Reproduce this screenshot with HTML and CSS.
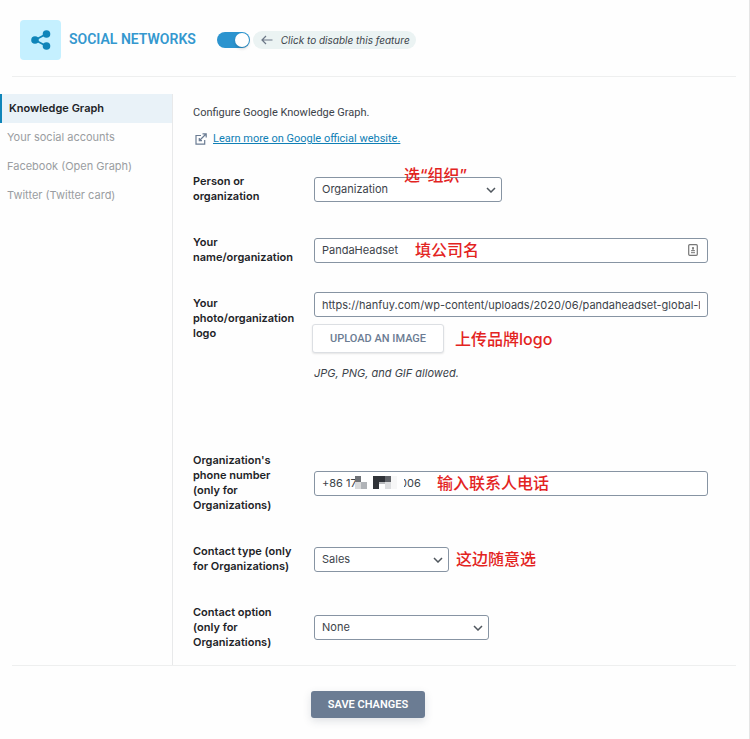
FILE: index.html
```html
<!DOCTYPE html>
<html lang="en">
<head>
<meta charset="utf-8">
<title>Social Networks</title>
<link rel="stylesheet" href="styles.css">
</head>
<body>
<main class="page">
  <header class="header">
    <span class="badge">
      <svg viewBox="0 0 20 20" width="20" height="20" aria-hidden="true">
        <path d="M4 10 15.300 4M4 10l11.300 6" stroke="#0f85b9" stroke-width="1.800" fill="none"/>
        <circle cx="4" cy="10" r="3.800" fill="#0f85b9"/><circle cx="15.500" cy="4" r="3.800" fill="#0f85b9"/><circle cx="15.500" cy="16" r="3.800" fill="#0f85b9"/>
      </svg>
    </span>
    <h1 class="title">SOCIAL NETWORKS</h1>
    <input class="toggle" type="checkbox" id="feature" checked>
    <label class="hint" for="feature">
      <svg viewBox="0 0 12 10" width="12" height="10" aria-hidden="true"><path d="M5 1 1 5l4 4M1 5h10.500" fill="none" stroke="#6c7787" stroke-width="1.200"/></svg>
      Click to disable this feature
    </label>
  </header>
  <div class="body">
    <nav class="tabs">
      <a class="tab active" href="#graph">Knowledge Graph</a>
      <a class="tab" href="#accounts">Your social accounts</a>
      <a class="tab" href="#facebook">Facebook (Open Graph)</a>
      <a class="tab" href="#twitter">Twitter (Twitter card)</a>
    </nav>
    <form class="form" id="graph">
      <p class="intro">Configure Google Knowledge Graph.</p>
      <p class="more">
        <svg viewBox="0 0 12 12" width="12" height="12" aria-hidden="true"><path d="M6 2.500H1v8.700h8.700V7M7.500.8h3.700v3.700M11 1 4.500 7.500M4.300 5v2.700H7" fill="none" stroke="#6b7c93" stroke-width="1.200"/></svg>
        <a href="#learn">Learn more on Google official website.</a>
      </p>

      <div class="row">
        <label for="kind">Person or organization</label>
        <div class="control">
          <span class="select medium"><select id="kind"><option>Organization</option></select><svg viewBox="0 0 10 6" width="10" height="6" aria-hidden="true"><path d="m1 1 4 4 4-4"/></svg></span>
          <span class="note over note-kind">选“组织”</span>
        </div>
      </div>
      <div class="row">
        <label for="name">Your name/organization</label>
        <div class="control">
          <input class="text" id="name" type="text" value="PandaHeadset">
          <span class="note over note-name">填公司名</span>
          <svg class="autofill" viewBox="0 0 10 12" width="10" height="12" aria-hidden="true"><rect x=".7" y=".7" width="8.600" height="10.600" rx="1" fill="#fff" stroke="#777" stroke-width="1.200"/><circle cx="5" cy="4" r="1.100" fill="#777"/><path d="M5 4v3M3 6.700h4M3 8.700h4" stroke="#777" stroke-width="1"/></svg>
        </div>
      </div>
      <div class="row tall">
        <label for="logo">Your photo/organization logo</label>
        <div class="control">
          <input class="text" id="logo" type="text" value="https://hanfuy.com/wp-content/uploads/2020/06/pandaheadset-global-logo.png">
          <div class="upload">
            <button class="outline" type="button">UPLOAD AN IMAGE</button>
            <span class="note">上传品牌logo</span>
          </div>
          <p class="help">JPG, PNG, and GIF allowed.</p>
        </div>
      </div>
      <div class="row">
        <label for="phone">Organization's phone number (only for Organizations)</label>
        <div class="control">
          <input class="text" id="phone" type="text" value="+86 17&nbsp;&nbsp;&nbsp;&nbsp;&nbsp;&nbsp;&nbsp;&nbsp;&nbsp;&nbsp;&nbsp;&nbsp;&nbsp;&nbsp;006">
          <svg class="mask" viewBox="0 0 50 14" width="50" height="14" aria-hidden="true">
            <path fill="#fff" d="M3 0h47v14H3z"/>
            <path fill="#6f7277" d="M1 0h6v6H1z"/><path fill="#d9dadb" d="M1 6h6v7H1z"/><path fill="#b1b4b8" d="M7 6h6v7H7z"/>
            <path fill="#303338" d="M19 0h6v13h-6zM25 0h6v6h-6z"/><path fill="#606368" d="M31 0h6v6h-6z"/><path fill="#b8babd" d="M25 6h6v2h-6z"/><path fill="#dcdddf" d="M31 6h6v7h-6z"/><path fill="#f7f7f7" d="M37 0h6v13h-6z"/>
          </svg>
          <span class="note over note-phone">输入联系人电话</span>
        </div>
      </div>
      <div class="row">
        <label for="type">Contact type (only for Organizations)</label>
        <div class="control inline">
          <span class="select small"><select id="type"><option>Sales</option></select><svg viewBox="0 0 10 6" width="10" height="6" aria-hidden="true"><path d="m1 1 4 4 4-4"/></svg></span>
          <span class="note">这边随意选</span>
        </div>
      </div>
      <div class="row">
        <label for="option">Contact option (only for Organizations)</label>
        <div class="control">
          <span class="select regular"><select id="option"><option>None</option></select><svg viewBox="0 0 10 6" width="10" height="6" aria-hidden="true"><path d="m1 1 4 4 4-4"/></svg></span>
        </div>
      </div>
    </form>
  </div>
  <footer class="footer"><button class="save" type="submit" form="graph">SAVE CHANGES</button></footer>
</main>
</body>
</html>
```
FILE: styles.css
```css
* { box-sizing: border-box; }
body {
  margin: 0;
  background: #fefefe;
  color: #3c434a;
  font: 11px/15px Inter, "Noto Sans CJK SC", sans-serif;
}
p, h1 { margin: 0; }
button, input, select { font: inherit; color: inherit; }
.page { min-height: 100vh; border-right: 1px solid #e5e5e5; }

.header {
  display: flex;
  align-items: center;
  margin: 0 13px 0 12px;
  padding: 20px 8px 16px;
  border-bottom: 1px solid #eeefef;
}
.badge {
  display: flex;
  align-items: center;
  justify-content: center;
  width: 41px;
  height: 40px;
  border-radius: 4px;
  background: #c5f0ff;
}
.title {
  margin: 0 21px 2px 8px;
  color: #3498cf;
  font-family: Roboto, sans-serif;
  font-size: 14px;
  font-weight: 600;
}
.toggle {
  appearance: none;
  display: flex;
  justify-content: flex-end;
  width: 33px;
  height: 16px;
  margin: 0 3px 0 0;
  padding: 1px;
  border-radius: 8px;
  background: #2c94cf;
}
.toggle::before {
  content: "";
  width: 14px;
  height: 14px;
  border-radius: 50%;
  background: #fff;
  box-shadow: 0 2px 3px rgba(0, 0, 0, .15);
}
.hint {
  display: flex;
  align-items: center;
  gap: 8px;
  height: 18px;
  padding: 0 6px 0 8px;
  border-radius: 9px;
  background: #ebf3f3;
  font-size: 10px;
  font-style: italic;
}

.body {
  display: grid;
  grid-template-columns: 173px 1fr;
  margin-top: 17px;
}
.tabs { border-right: 1px solid #e8e9ea; }
.tab {
  display: block;
  padding: 7px;
  color: #9a9da1;
  text-decoration: none;
}
.tab.active {
  border-left: 2px solid #0f85b9;
  background: #e9f2f8;
  color: #1d2327;
  font-weight: 600;
}

.form { padding: 11px 41px 0 20px; }
.intro, .more { font-family: Roboto, sans-serif; }
.more {
  display: flex;
  align-items: center;
  gap: 6px;
  margin: 11px 0 12px;
  padding-left: 2px;
}
.more a { color: #0f7fb5; }
.row {
  display: grid;
  grid-template-columns: 107px 1fr;
  column-gap: 14px;
  align-items: center;
  padding: 16px 0 15px;
}
.row > label { color: #1d2327; font-weight: 600; }
.row.tall { align-items: start; min-height: 157px; }
.tall .control { margin-top: -4px; }
.control { position: relative; }
.inline { display: flex; align-items: center; gap: 7px; }
.text, .select select {
  display: block;
  width: 100%;
  height: 25px;
  padding: 0 7px;
  border: 1px solid #8794a3;
  border-radius: 3px;
  background: #fff;
}
.select { display: block; position: relative; }
.select select { appearance: none; }
.select svg {
  position: absolute;
  top: 10px;
  right: 6px;
  fill: none;
  stroke: #50575e;
  stroke-width: 1.5;
  pointer-events: none;
}
.small { width: 135px; }
.regular { width: 175px; }
.medium { width: 188px; }

.note {
  color: #e3241f;
  font-size: 16px;
  font-weight: 500;
  line-height: 20px;
  white-space: nowrap;
}
.over { position: absolute; top: 2px; pointer-events: none; }
.note-kind { top: -12px; left: 90px; }
.note-name { left: 101px; }
.note-phone { left: 123px; }
.autofill { position: absolute; top: 6px; right: 10px; }
.mask { position: absolute; top: 5px; left: 40px; }

.upload {
  display: flex;
  align-items: center;
  gap: 11px;
  margin: 7px 0 13px -2px;
}
.outline {
  height: 29px;
  padding: 0 17px;
  border: 1px solid #dcdfe3;
  border-radius: 3px;
  background: #fff;
  box-shadow: 0 1px 2px rgba(0, 0, 0, .1);
  color: #6b7c93;
  font-family: Roboto, sans-serif;
  font-weight: 500;
}
.help { font-style: italic; }

.footer {
  display: flex;
  justify-content: center;
  margin: 0 13px 0 12px;
  padding: 25px 12px 20px 0;
  border-top: 1px solid #eeefef;
}
.save {
  height: 27px;
  padding: 0 17px;
  border: 0;
  border-radius: 3px;
  background: #6b7c93;
  box-shadow: 0 3px 8px rgba(50, 60, 80, .15);
  color: #fff;
  font-family: Roboto, sans-serif;
  font-weight: 600;
}
```
